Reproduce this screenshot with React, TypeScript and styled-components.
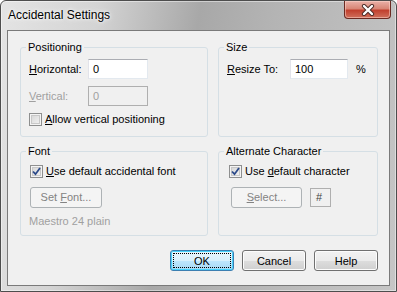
import React from 'react'
import styled, { createGlobalStyle } from 'styled-components'

const Global = createGlobalStyle`
  html, body { margin: 0; padding: 0; background: #fff; }
  body { font-family: "Segoe UI", "Liberation Sans", Arial, sans-serif; font-size: 11px; color: #000; }
  * { box-sizing: border-box; }
`

const Window = styled.div`
  width: 397px;
  height: 292px;
  display: flex;
  flex-direction: column;
  padding: 0 6px 5px 6px;
  border: 1px solid #4d4d4d;
  border-radius: 6px 6px 0 0;
  background: linear-gradient(100deg, #e4e4e4 0%, #d4d4d4 22%, #a8a8a8 45%, #b4b4b4 62%, #c6c6c6 100%);
  box-shadow: inset 0 0 0 1px rgba(255,255,255,0.45);
`

const TitleBar = styled.div`
  height: 29px;
  display: flex;
  justify-content: space-between;
  align-items: flex-start;
`

const Title = styled.span`
  padding: 6px 0 0 1px;
  font-size: 12px;
  line-height: 16px;
  color: #000;
  text-shadow: 0 0 6px #fff, 0 0 3px #fff;
`

const CloseButton = styled.div`
  width: 47px;
  height: 18px;
  margin-right: -1px;
  display: flex;
  align-items: center;
  justify-content: center;
  border: 1px solid #6b2a22;
  border-top: none;
  border-radius: 0 0 4px 4px;
  background: linear-gradient(#eab1a8 0%, #d88676 45%, #c1402e 55%, #d0705c 100%);
  box-shadow: inset 0 0 0 1px rgba(255,220,210,0.5);
`

const Client = styled.div`
  flex: 1;
  display: flex;
  flex-direction: column;
  background: #f0f0f0;
  border: 1px solid #7a7a7a;
  padding: 8px 11px 14px 12px;
`

const Groups = styled.div`
  display: grid;
  grid-template-columns: 188px 160px;
  grid-template-rows: 98px 93px;
  column-gap: 10px;
  row-gap: 6px;
`

const Group = styled.fieldset`
  margin: 0;
  min-width: 0;
  padding: 4px 8px 0 8px;
  border: 1px solid #d5dfe5;
  border-radius: 3px;
  display: flex;
  flex-direction: column;
  align-items: flex-start;
`

const Legend = styled.legend`
  padding: 0 2px;
  margin-left: -3px;
  line-height: 16px;
`

const Row = styled.div<{ $gap?: number }>`
  display: flex;
  align-items: center;
  height: 20px;
  margin-bottom: ${p => p.$gap ?? 0}px;
`

const Label = styled.span<{ $width?: number; $disabled?: boolean }>`
  width: ${p => (p.$width ? `${p.$width}px` : 'auto')};
  color: ${p => (p.$disabled ? '#a0a0a0' : '#000')};
  white-space: nowrap;
`

const U = styled.span`
  text-decoration: underline;
  text-underline-offset: 1px;
`

const Input = styled.div<{ $width: number; $disabled?: boolean }>`
  width: ${p => p.$width}px;
  height: 20px;
  padding: 0 4px;
  display: flex;
  align-items: center;
  background: ${p => (p.$disabled ? '#f0f0f0' : '#fff')};
  color: ${p => (p.$disabled ? '#a0a0a0' : '#000')};
  border: 1px solid ${p => (p.$disabled ? '#afafaf' : '#e3e9ef')};
  border-top-color: ${p => (p.$disabled ? '#afafaf' : '#abadb3')};
  border-left-color: ${p => (p.$disabled ? '#afafaf' : '#e2e3ea')};
`

const Percent = styled.span`
  margin-left: 8px;
`

const CheckRow = styled.label<{ $indent?: number }>`
  display: flex;
  align-items: center;
  gap: 3px;
  height: 16px;
  margin-left: ${p => p.$indent ?? 0}px;
  white-space: nowrap;
`

const Box = styled.span`
  width: 13px;
  height: 13px;
  display: flex;
  align-items: center;
  justify-content: center;
  border: 1px solid #8e8f8f;
  box-shadow: inset 0 0 0 1px #f4f4f4, inset 0 0 0 2px #c8c8c8;
  background-image: linear-gradient(135deg, #d2d2d2, #f6f6f6);
`

const Button = styled.div<{ $width?: number; $disabled?: boolean }>`
  width: ${p => p.$width ?? 64}px;
  height: 21px;
  display: flex;
  align-items: center;
  justify-content: center;
  white-space: pre;
  border: 1px solid ${p => (p.$disabled ? '#adb2b5' : '#707070')};
  border-radius: 3px;
  color: ${p => (p.$disabled ? '#838383' : '#000')};
  background: ${p => (p.$disabled
    ? '#f4f4f4'
    : 'linear-gradient(#f2f2f2 0%, #ebebeb 50%, #dddddd 51%, #cfcfcf 100%)')};
  box-shadow: inset 0 0 0 1px ${p => (p.$disabled ? '#f4f4f4' : '#fcfcfc')};
`

const DefaultButton = styled(Button)`
  border-color: #3c7fb1;
  background: linear-gradient(#eaf6fd 0%, #d9f0fc 50%, #bee6fd 51%, #a7d9f5 100%);
  box-shadow: inset 0 0 0 1px #48d2fc;

  > span {
    display: flex;
    align-items: center;
    justify-content: center;
    width: calc(100% - 6px);
    height: calc(100% - 6px);
    outline: 1px dotted #000;
  }
`

const Hint = styled.span`
  color: #a0a0a0;
  line-height: 16px;
`

const Small = styled(Input)`
  height: 19px;
  color: #444;
  padding: 0 5px;
`

const ButtonBar = styled.div`
  margin-top: auto;
  display: flex;
  justify-content: flex-end;
  gap: 8px;
`

const Check = ({ checked }: { checked?: boolean }) => (
  <Box>
    {checked && (
      <svg width="9" height="9" viewBox="0 0 9 9">
        <path d="M1 4.5 L3.5 7.2 L8 1" fill="none" stroke="#2c4a8a" strokeWidth="1.8" />
      </svg>
    )}
  </Box>
)

export default function App() {
  return (
    <>
      <Global />
      <Window>
        <TitleBar>
          <Title>Accidental Settings</Title>
          <CloseButton>
            <svg width="14" height="12" viewBox="0 0 14 12">
              <path d="M3 2 L11 10 M11 2 L3 10" stroke="#4a2a26" strokeWidth="4.2" strokeLinecap="round" />
              <path d="M3 2 L11 10 M11 2 L3 10" stroke="#fff" strokeWidth="2.4" strokeLinecap="round" />
            </svg>
          </CloseButton>
        </TitleBar>
        <Client>
          <Groups>
            <Group>
              <Legend>Positioning</Legend>
              <Row $gap={7}>
                <Label $width={59}><U>H</U>orizontal:</Label>
                <Input $width={60}>0</Input>
              </Row>
              <Row $gap={5}>
                <Label $width={59} $disabled><U>V</U>ertical:</Label>
                <Input $width={60} $disabled>0</Input>
              </Row>
              <CheckRow>
                <Check />
                <span><U>A</U>llow vertical positioning</span>
              </CheckRow>
            </Group>
            <Group>
              <Legend>Size</Legend>
              <Row>
                <Label $width={63}><U>R</U>esize To:</Label>
                <Input $width={58}>100</Input>
                <Percent>%</Percent>
              </Row>
            </Group>
            <Group>
              <Legend>Font</Legend>
              <CheckRow $indent={1}>
                <Check checked />
                <span><U>U</U>se default accidental font</span>
              </CheckRow>
              <Row style={{ marginTop: 8, marginBottom: 6, marginLeft: 1 }}>
                <Button $width={72} $disabled><span>Set <U>F</U>ont...</span></Button>
              </Row>
              <Hint>Maestro 24 plain</Hint>
            </Group>
            <Group>
              <Legend>Alternate Character</Legend>
              <CheckRow $indent={2}>
                <Check checked />
                <span>Use <U>d</U>efault character</span>
              </CheckRow>
              <Row style={{ marginTop: 8, marginLeft: 4, gap: 8 }}>
                <Button $width={71} $disabled><span><U>S</U>elect...</span></Button>
                <Small $width={21} $disabled>#</Small>
              </Row>
            </Group>
          </Groups>
          <ButtonBar>
            <DefaultButton><span>OK</span></DefaultButton>
            <Button>Cancel</Button>
            <Button>Help</Button>
          </ButtonBar>
        </Client>
      </Window>
    </>
  )
}
